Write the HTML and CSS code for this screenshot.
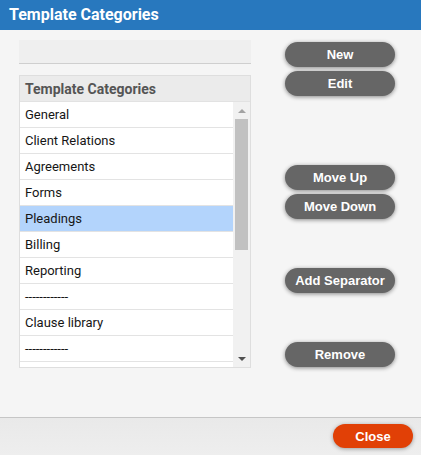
FILE: index.html
```html
<!DOCTYPE html>
<html>
<head>
<meta charset="utf-8">
<link rel="stylesheet" href="styles.css">
</head>
<body>
<div class="titlebar">Template Categories</div>
<div class="main">
  <div class="leftcol">
    <div class="topbar"></div>
    <div class="listbox">
      <div class="listhead">Template Categories</div>
      <div class="listbody">
        <div class="rows">
          <div class="row">General</div>
          <div class="row">Client Relations</div>
          <div class="row">Agreements</div>
          <div class="row">Forms</div>
          <div class="row selected">Pleadings</div>
          <div class="row">Billing</div>
          <div class="row">Reporting</div>
          <div class="row">------------</div>
          <div class="row">Clause library</div>
          <div class="row">------------</div>
          <div class="row">&nbsp;</div>
        </div>
        <div class="scrollbar">
          <div class="arrow up"></div>
          <div class="thumb"></div>
          <div class="spacer"></div>
          <div class="arrow down"></div>
        </div>
      </div>
    </div>
  </div>
  <div class="rightcol">
    <button class="btn">New</button>
    <button class="btn gap4">Edit</button>
    <button class="btn gap69">Move Up</button>
    <button class="btn gap4">Move Down</button>
    <button class="btn gap49">Add Separator</button>
    <button class="btn gap49">Remove</button>
  </div>
</div>
<div class="footer">
  <button class="close">Close</button>
</div>
</body>
</html>
```
FILE: styles.css
```css
* { box-sizing: border-box; }
html, body { margin: 0; padding: 0; }
body {
  width: 421px;
  height: 455px;
  background: #f5f5f5;
  font-family: Roboto, "Liberation Sans", sans-serif;
  overflow: hidden;
}
.titlebar {
  height: 30px;
  background: #2878be;
  color: #fff;
  font-weight: bold;
  font-size: 16px;
  line-height: 30px;
  padding-left: 9px;
}
.main {
  height: 387px;
  display: flex;
  padding: 10px 0 0 19px;
}
.leftcol {
  width: 232px;
  display: flex;
  flex-direction: column;
}
.topbar {
  height: 24px;
  background: #efefef;
  border-bottom: 1px solid #cfcfcf;
}
.listbox {
  margin-top: 11px;
  border: 1px solid #dedede;
  background: #fff;
}
.listhead {
  height: 26px;
  line-height: 26px;
  background: #ebebeb;
  border-bottom: 1px solid #e2e2e2;
  color: #555;
  font-weight: bold;
  font-size: 14px;
  padding-left: 5px;
}
.listbody {
  display: flex;
  height: 265px;
  overflow: hidden;
}
.rows {
  width: 213px;
  overflow: hidden;
}
.row {
  height: 26px;
  line-height: 26px;
  border-bottom: 1px solid #e3e3e3;
  font-size: 13px;
  color: #161616;
  padding-left: 5px;
  white-space: nowrap;
}
.row.selected { background: #b3d4fc; }
.scrollbar {
  width: 17px;
  background: #f1f1f1;
  display: flex;
  flex-direction: column;
  align-items: center;
}
.arrow {
  height: 17px;
  width: 17px;
  display: flex;
  align-items: center;
  justify-content: center;
}
.arrow::before {
  content: "";
  width: 0;
  height: 0;
  border-left: 4px solid transparent;
  border-right: 4px solid transparent;
}
.arrow.up::before { border-bottom: 4px solid #a3a3a3; }
.arrow.down::before { border-top: 4px solid #505050; }
.thumb {
  width: 13px;
  height: 131px;
  background: #c1c1c1;
}
.spacer { flex: 1; }
.rightcol {
  margin-left: 34px;
  display: flex;
  flex-direction: column;
  padding-top: 2px;
}
.btn, .close {
  border: none;
  border-radius: 13px;
  color: #fff;
  font-family: "Liberation Sans", Arial, sans-serif;
  font-weight: bold;
  font-size: 13px;
  padding: 0;
  cursor: pointer;
}
.btn {
  width: 110px;
  height: 25px;
  background: #666;
  box-shadow: 0 1px 4px rgba(0,0,0,0.45);
}
.gap4 { margin-top: 4px; }
.gap69 { margin-top: 69px; }
.gap49 { margin-top: 49px; }
.footer {
  height: 38px;
  border-top: 1px solid #c6c6c6;
  background: linear-gradient(#e9e9e9, #eeeeee);
  display: flex;
  justify-content: flex-end;
  padding: 6px 8px 0 0;
}
.close {
  width: 80px;
  height: 24px;
  background: #e14006;
  font-size: 13px;
  box-shadow: 0 1px 4px rgba(0,0,0,0.35);
}
```
